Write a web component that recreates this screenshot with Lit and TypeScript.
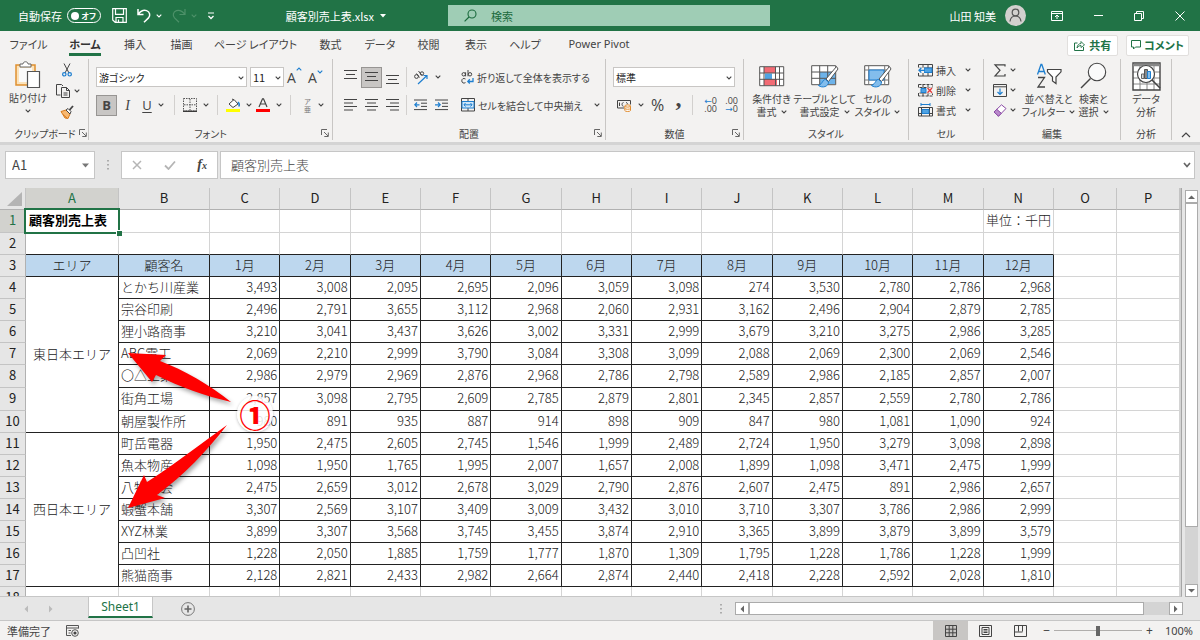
import { LitElement, html, svg, css, nothing, TemplateResult } from "lit";
import { customElement, property } from "lit/decorators.js";
import { classMap } from "lit/directives/class-map.js";

const MONTHS = ["1月", "2月", "3月", "4月", "5月", "6月", "7月", "8月", "9月", "10月", "11月", "12月"];
const LETTERS = "ABCDEFGHIJKLMNOP".split("");

interface Customer { name: string; sales: number[]; }
interface Area { name: string; customers: Customer[]; }

const c = (name: string, ...sales: number[]): Customer => ({ name, sales });

const AREAS: Area[] = [
  {
    name: "東日本エリア",
    customers: [
      c("とかち川産業", 3493, 3008, 2095, 2695, 2096, 3059, 3098, 274, 3530, 2780, 2786, 2968),
      c("宗谷印刷", 2496, 2791, 3655, 3112, 2968, 2060, 2931, 3162, 2496, 2904, 2879, 2785),
      c("狸小路商事", 3210, 3041, 3437, 3626, 3002, 3331, 2999, 3679, 3210, 3275, 2986, 3285),
      c("ABC電工", 2069, 2210, 2999, 3790, 3084, 3308, 3099, 2088, 2069, 2300, 2069, 2546),
      c("〇△工業", 2986, 2979, 2969, 2876, 2968, 2786, 2798, 2589, 2986, 2185, 2857, 2007),
      c("街角工場", 2857, 3098, 2795, 2609, 2785, 2879, 2801, 2345, 2857, 2559, 2780, 2786),
      c("朝屋製作所", 980, 891, 935, 887, 914, 898, 909, 847, 980, 1081, 1090, 924),
    ],
  },
  {
    name: "西日本エリア",
    customers: [
      c("町岳電器", 1950, 2475, 2605, 2745, 1546, 1999, 2489, 2724, 1950, 3279, 3098, 2898),
      c("魚本物産", 1098, 1950, 1765, 1995, 2007, 1657, 2008, 1899, 1098, 3471, 2475, 1999),
      c("八物商会", 2475, 2659, 3012, 2678, 3029, 2790, 2876, 2607, 2475, 891, 2986, 2657),
      c("蝦蟹本舗", 3307, 2569, 3107, 3409, 3009, 3432, 3010, 3710, 3307, 3786, 2986, 2999),
      c("XYZ林業", 3899, 3307, 3568, 3745, 3455, 3874, 2910, 3365, 3899, 3879, 3899, 3579),
      c("凸凹社", 1228, 2050, 1885, 1759, 1777, 1870, 1309, 1795, 1228, 1786, 1228, 1999),
      c("熊猫商事", 2128, 2821, 2433, 2982, 2664, 2874, 2440, 2418, 2228, 2592, 2028, 1810),
    ],
  },
];

/* ---------- icons ---------- */

const G = "#444";
const B = "#1e7fd0";
const LB = "#83bdec";

const icon = (w: number, h: number, body: unknown) => html`<svg
  class="ic" width=${w} height=${h} viewBox="0 0 ${w} ${h}" fill="none" aria-hidden="true">${body}</svg>`;

const caret = () => icon(6, 4, svg`<path d="M.7.7 3 3 5.3.7" stroke="currentColor" stroke-width="1.1"/>`);

/* Three or four text lines; "top" shifts the block for top / middle / bottom alignment. */
const lines = (spans: [number, number][], pitch: number, top: number) =>
  icon(13, 14, svg`${spans.map(([a, b], i) => svg`<path d="M${a} ${top + i * pitch}H${b}" stroke=${G}/>`)}`);

const ICONS: Record<string, TemplateResult> = {
  save: icon(15, 15, svg`<path d="M.7.7h13.6v13.6H3.2L.7 12z M3.5.7v5.6h8V.7 M4 14V9.5h7V14 M6.5 14v-2.5" stroke="#fff" stroke-width="1.2"/>`),
  undo: icon(14, 15, svg`<path d="M1 1v5.5h5.5 M1.3 6.2C4 2.6 7 1.8 9.6 2.6 13 3.8 13.6 7.600 11.500 9.900L7 14.300" stroke="#fff" stroke-width="1.5"/>`),
  redo: icon(14, 15, svg`<path d="M13 1v5.500H7.500 M12.700 6.200C10 2.600 7 1.800 4.400 2.600 1 3.800.4 7.600 2.500 9.900L7 14.300" stroke="#4d9169" stroke-width="1.200"/>`),
  qat: icon(8, 8, svg`<path d="M1 1h6" stroke="#fff"/><path d="M1.500 4 4 6.500 6.500 4" stroke="#fff" stroke-width="1.300"/>`),
  search: icon(13, 13, svg`<circle cx="8" cy="5" r="4" stroke="#1b6a3d" stroke-width="1.100"/><path d="M5 8 .6 12.400" stroke="#1b6a3d" stroke-width="1.200"/>`),
  user: icon(21, 21, svg`<circle cx="10.500" cy="10.500" r="10.500" fill="#d2d0ce"/><circle cx="10.500" cy="7.500" r="3.300" stroke="#555" stroke-width="1.200"/><path d="M5 16.500c.4-3.700 2.500-5.500 5.500-5.500s5.100 1.800 5.500 5.500" stroke="#555" stroke-width="1.200"/>`),
  ribbonOpt: icon(12, 10, svg`<path d="M.5.500h11v9H.5z M.5 2.500h11 M6 8V4 M4 6l2-2 2 2" stroke="#fff"/>`),
  min: icon(9, 9, svg`<path d="M0 4.500h9" stroke="#fff"/>`),
  restore: icon(10, 10, svg`<path d="M.5 2.500h7v7h-7z M2.500 2.500v-2h7v7h-2" stroke="#fff"/>`),
  close: icon(10, 10, svg`<path d="M.5.500l9 9 M9.500.500l-9 9" stroke="#fff"/>`),
  share: icon(11, 11, svg`<path d="M3.500 3H.5v7.500h9V7" stroke="#217346"/><path d="M3 8c.3-3 2-4.500 4-4.500V1.500L10.500 5 7 7.500v-2C5.500 5.500 4 6.500 3 8z" stroke="#217346" stroke-width=".9"/>`),
  comment: icon(10, 10, svg`<path d="M.5.500h9v6.500H4.500L2.500 9V7h-2z" stroke="#217346"/>`),
  paste: icon(26, 28, svg`<path d="M1 4h19v20H1z" fill="#fbe3bb" stroke="#e0902f" stroke-width="1.500"/><path d="M4 7h13v14H4z" fill="#fafafa"/><path d="M5 6V3h3c0-3 5-3 5 0h3v3z" fill="#fff" stroke="#666"/><path d="M12.500 10.500h12v16h-12z" fill="#fff" stroke="#555" stroke-width="1.200"/>`),
  cut: icon(10, 14, svg`<path d="M2 .500 7 10 M8 .500 3 10" stroke=${G}/><circle cx="2.300" cy="11.300" r="1.700" stroke=${B} stroke-width="1.200"/><circle cx="7.700" cy="11.300" r="1.700" stroke=${B} stroke-width="1.200"/>`),
  copy: icon(15, 14, svg`<path d="M4.500 11H.5V.500h5L7 2" stroke=${G}/><path d="M5.500 3.500h5l3 3v7h-8z M10.500 3.500v3h3 M7.500 9h4 M7.500 11h4" stroke=${G}/>`),
  brush: icon(14, 14, svg`<path d="M1 6.500 6 5l4 4-2 4.500L5 13z" fill="#f7b871" stroke="#d77a1d"/><path d="M3 9.500l4 3.500" stroke="#d77a1d"/><path d="M6 5l2-1.500L11 6.500 10 9z" fill="#fff" stroke=${G}/><path d="M9.500 5 13 1" stroke=${G} stroke-width="1.800"/>`),
  borders: icon(14, 14, svg`<path d="M.5.500h13v12.500H.5z M7 1v12 M1 6.800h12" stroke="#555" stroke-dasharray="1.500 1"/><path d="M0 13.300h14" stroke="#333" stroke-width="1.300"/>`),
  fill: icon(14, 14, svg`<path d="M3 6l5-4.500 4 4.500-5 3.500z M6 1l2 1" fill="#fff" stroke=${G}/><path d="M12 4c1.500 1.500 1.500 3 .8 4.500" stroke=${B} stroke-width="1.600"/><path d="M0 11h14v3H0z" fill="#ff0"/>`),
  fontColor: icon(14, 14, svg`<path d="M3 9 6.500.800h1L11 9 M4.200 6h5.600" stroke=${G} stroke-width="1.200"/><path d="M0 11h14v3H0z" fill="#f00"/>`),
  orient: icon(16, 15, svg`<circle cx="3.500" cy="6.500" r="1.900" stroke=${G}/><path d="M3.500 3.500 6.500 7.500 M5.500 1l3.500 4.500" stroke=${G}/><circle cx="9" cy="3.500" r="1.700" stroke=${G}/><path d="M5 14 14 5.500 M10.500 5.500h3.500V9" stroke=${B} stroke-width="1.200"/>`),
  indentOut: icon(14, 12, svg`<path d="M0 1h13 M7 4.200h6 M7 7.400h6 M0 10.600h13" stroke=${G}/><path d="M5.500 5.800H.8 M3 3.500.8 5.800 3 8" stroke=${B} stroke-width="1.200"/>`),
  indentIn: icon(14, 12, svg`<path d="M0 1h13 M7 4.200h6 M7 7.400h6 M0 10.600h13" stroke=${G}/><path d="M0 5.800h5 M3 3.500l2.200 2.300L3 8" stroke=${B} stroke-width="1.200"/>`),
  wrap: icon(13, 14, svg`<circle cx="2.700" cy="4.300" r="1.700" stroke=${G}/><path d="M4.600 2.300v4 M7 0v6.300" stroke=${G}/><circle cx="9" cy="4.300" r="1.700" stroke=${G}/><path d="M4.500 9C2.500 7.800.8 8.800.8 10.800s1.700 3 3.700 1.800" stroke=${G}/><path d="M12 8v3.500H7 M8.800 9.300 6.800 11.500l2 2" stroke=${B} stroke-width="1.300"/>`),
  merge: icon(14, 14, svg`<path d="M.5.500h13v12.500H.5z M7 .500v3 M7 10v3" stroke=${G}/><path d="M1 3.500h12v6.500H1z" fill="#cfe6f8" stroke=${B}/><path d="M3 6.800h8 M4.500 5 3 6.800l1.500 1.700 M9.500 5 11 6.800 9.500 8.500" stroke=${B}/>`),
  currency: icon(15, 13, svg`<path d="M.5 1.500h13v4 M.5 1.500V9H7" stroke=${G}/><path d="M6.500 3.500c-2 .3-2 3.500 0 3.800 M9 3.500c1.500.3 1.500 1 1.300 1.800 M2.500 3.500v3.500" stroke=${G}/><path d="M7.800 7v4.500c0 1.300 5.700 1.300 5.700 0V7" fill="#fff" stroke="#e08a2c"/><ellipse cx="10.700" cy="7" rx="2.900" ry="1.100" fill="#fff" stroke="#e08a2c"/><path d="M7.800 9.300c0 1.300 5.700 1.300 5.700 0" stroke="#e08a2c"/>`),
  condFmt: icon(26, 22, svg`<path d="M.7 1.700h24v19H.7z" fill="#fff"/><path d="M5 2h11v6H5z M5 14h13v6.500H5z" fill="#f26b74"/><path d="M6 8.500h7v5.500H6z" fill="#4fa3e3"/><path d="M.7 1.700h24v19H.7z M.7 8h24 M.7 14.300h24 M5 1.700v19 M16.500 1.700v19 M20.500 1.700v19" stroke="#555"/>`),
  tableFmt: icon(28, 27, svg`<path d="M.7 2.700h24v19H.7z" fill="#fff"/><path d="M9 9h15.500v12H9z" fill="#6db3ea"/><path d="M.7 2.700h24v19H.7z M.7 9h24 M.7 15.300h24 M8.700 2.700v19 M16.700 2.700v19" stroke="#555"/><path d="M25.500 3.500 15 16l2.500 2.500L27 6z" fill="#fff" stroke="#555"/><path d="M14.500 16.500c-3 0-2.500 4-7 6 4 3 10 1 10-3.500z" fill=${LB} stroke=${B}/>`),
  cellStyle: icon(28, 27, svg`<path d="M.7 2.700h24v19H.7z" fill="#fff" stroke="#555"/><path d="M.7 7h24 M.7 17h24 M4.700 2.700v19 M20.700 2.700v19" stroke="#777"/><path d="M5 7h15v10H5z" fill=${LB} stroke=${B}/><path d="M25.500 3.500 15 16l2.500 2.500L27 6z" fill="#fff" stroke="#555"/><path d="M14.500 16.500c-3 0-2.500 4-7 6 4 3 10 1 10-3.500z" fill=${LB} stroke=${B}/>`),
  insert: icon(15, 13, svg`<path d="M.5.500h14v11.500H.5z M.5 4h14 M.5 8.500h14 M5 .500v3.500 M10 .500v11.500 M5 8.500v3.500" stroke=${G}/><path d="M6 4h8v4.500H6z" fill="#4fa3e3" stroke=${B}/><path d="M0 3.500h6v5.500H0z" fill="#f3f2f1"/><path d="M7 6.300H1 M3.300 4 1 6.300l2.300 2.300" stroke=${B} stroke-width="1.300"/>`),
  remove: icon(15, 13, svg`<path d="M.5.500h14v3 M.5.500v3h14 M5 .500v3 M10 .500v3 M.5 12V9h14v3H.5 M5 9v3 M10 9v3" stroke=${G} stroke-dasharray="3 1"/><path d="M3 4.500h5v4H3z" fill="#4fa3e3" stroke=${B}/><path d="M9 3.500h6v6H9z" fill="#f3f2f1"/><path d="M9.500 4 14 8.800 M14 4 9.500 8.800" stroke="#e33b3b" stroke-width="1.300"/>`),
  format: icon(15, 14, svg`<path d="M3 1.500h9 M3 0v3 M12 0v3" stroke=${B}/><path d="M.5 4.500h14V13H.5z M.5 10.500h14 M3.500 4.500V13 M11.500 4.500V13" stroke=${G}/><path d="M4 6.500h7v4H4z" fill="#4fa3e3" stroke=${B}/>`),
  sigma: icon(14, 13, svg`<path d="M12 2.500V.800H2l5 5.500L2 12h10v-2" stroke=${G} stroke-width="1.200"/>`),
  fillDown: icon(14, 13, svg`<path d="M.5.500h13v12H.5z M.5 2.800h13" stroke=${G}/><path d="M7 4.500v6 M4.500 8 7 10.500 9.500 8" stroke=${B} stroke-width="1.200"/>`),
  eraser: icon(14, 13, svg`<path d="M1 8 8.500.800 13 4.500 5.500 12.200z" fill="#fff" stroke="#8a4aa5"/><path d="M1 8l2.800-2.700L8.300 9.300 5.500 12.200z" fill="#b98acb" stroke="#8a4aa5"/>`),
  sortFilter: icon(26, 26, svg`<path d="M1.500 11.500 5 1.500h.8l3.500 10 M2.500 8.500h6" stroke=${B} stroke-width="1.300"/><path d="M2 14.500h6.500L2 24h7" stroke=${G} stroke-width="1.300"/><path d="M11.500 6.500h13.500v2.300L20 14v6.500L16.500 18v-4L11.500 8.800z" fill="#fff" stroke=${G} stroke-width="1.200"/>`),
  find: icon(27, 28, svg`<circle cx="17" cy="10" r="8.700" fill="#fafafa" stroke=${G} stroke-width="1.100"/><path d="M10.500 16.500 1 26" stroke=${G} stroke-width="1.400"/>`),
  analyze: icon(29, 29, svg`<path d="M1 1h27v27H1z" fill="#fff"/><path d="M1 10h27 M1 16h27 M1 22h27 M8 4v24 M15 4v24 M22 4v24" stroke="#888"/><path d="M1 1h27v27H1z" stroke=${G} stroke-width="1.400"/><path d="M1 3h27" stroke="#888" stroke-width="2.500"/><circle cx="14" cy="12" r="8.500" fill="#fff" stroke=${G} stroke-width="1.200"/><path d="M9.500 12h2.500v4.500H9.500z" fill="#ddd" stroke="#666"/><path d="M12.500 7.500h3v9h-3z" fill="#888" stroke="#555"/><path d="M15.500 9.500h3v7h-3z" fill=${LB} stroke=${B}/><path d="M20 18l8 8" stroke=${G} stroke-width="1.600"/>`),
  launcher: icon(8, 8, svg`<path d="M.5 6V.500H6 M3 3l4 4 M7.300 3.500v4h-4" stroke="#666"/>`),
  collapse: icon(10, 6, svg`<path d="M1 5 5 1l4 4" stroke=${G} stroke-width="1.200"/>`),
  tri: icon(8, 5, svg`<path d="M0 .500h7L3.500 4.500z" fill="#777"/>`),
  cancel: icon(10, 10, svg`<path d="M1 1l8 8 M9 1 1 9" stroke="#b5b5b5" stroke-width="1.500"/>`),
  enter: icon(12, 10, svg`<path d="M1 5.500 4.500 9 11 1.500" stroke="#b5b5b5" stroke-width="1.800"/>`),
  expand: icon(8, 6, svg`<path d="M1 1l3 3.500L7 1" stroke="#666" stroke-width="1.700"/>`),
  up: icon(7, 4, svg`<path d="M0 4h7L3.500.500z" fill="#666"/>`),
  down: icon(7, 4, svg`<path d="M0 0h7L3.500 3.500z" fill="#666"/>`),
  left: icon(4, 8, svg`<path d="M4 .500v7L.5 4z" fill="currentColor"/>`),
  right: icon(4, 8, svg`<path d="M0 .500v7L3.500 4z" fill="currentColor"/>`),
  plus: icon(14, 14, svg`<circle cx="7" cy="7" r="6.400" stroke="#777"/><path d="M7 3.500v7 M3.500 7h7" stroke="#666" stroke-width="1.600"/>`),
  dots: icon(2, 10, svg`<path d="M1 0v10" stroke="#999" stroke-width="1.500" stroke-dasharray="1.500 2.500"/>`),
  macro: icon(13, 12, svg`<path d="M5 10.500H.5v-10h12v3 M.5 3h12 M2.500 5.500H5 M2.500 8h2" stroke="#555"/><circle cx="9" cy="8" r="3.300" stroke="#555"/><circle cx="9" cy="8" r="1.600" fill="#444"/>`),
  viewNormal: icon(12, 12, svg`<path d="M.5.500h11v11H.5z M.5 4.200h11 M.5 7.800h11 M4.200.500v11 M7.800.500v11" stroke="#444"/>`),
  viewPage: icon(13, 12, svg`<path d="M.5.500h12v11H.5z M3 2.500h7v7H3z M4.500 4.500h4 M4.500 6h4 M4.500 7.500h4" stroke="#444"/>`),
  viewBreak: icon(13, 12, svg`<path d="M.5.500h12v11H.5z M4.500.500v6 M8.500.500v6 M.5 7h8" stroke="#444"/>`),
  corner: icon(15, 14, svg`<path d="M15 0v14H0z" fill="#b4b4b4"/>`),
};

const base = css`
  * { box-sizing: border-box; }
  .ic { display: block; flex: none; }
  button, input, select { font: inherit; color: inherit; margin: 0; }
  button { background: none; border: 0; padding: 0; white-space: nowrap; }
`;

/* ---------- ribbon ---------- */

@customElement("ribbon-group")
export class RibbonGroup extends LitElement {
  @property() label = "";
  @property({ type: Boolean }) launcher = false;
  static styles = [base, css`
    :host { display: flex; flex-direction: column; border-right: 1px solid #c8c6c4; min-width: 0; }
    .body { flex: 1; display: flex; min-height: 0; }
    .foot { display: grid; grid-template-columns: 14px 1fr 14px; align-items: center; height: 14px; text-align: center; white-space: nowrap; }
    .name { grid-column: 2; justify-self: center; }
    .foot button { grid-column: 3; justify-self: center; }
  `];
  render() {
    return html`<div class="body"><slot></slot></div>
      <div class="foot"><span class="name">${this.label}</span>
        ${this.launcher ? html`<button aria-label="${this.label}の設定">${ICONS.launcher}</button>` : nothing}</div>`;
  }
}

@customElement("excel-ribbon")
export class ExcelRibbon extends LitElement {
  static styles = [base, css`
    :host { display: block; background: #f3f2f1; border-bottom: 3px solid #d4d4d4; color: #444; font-size: 10px; line-height: 13px; }
    .tabs { display: flex; align-items: center; height: 28px; font-size: 11px; line-height: 16px; }
    .tablist { display: grid; grid-template-columns: 57px 56px 44px 49px 99px 51px 48px 49px 46px 52px 96px; justify-items: center; }
    .tab { padding: 2px 0 1px; border-bottom: 3px solid transparent; }
    .tab.on { color: #333; font-weight: 700; border-color: #217346; }
    .tab.latin { font-family: "Noto Sans", sans-serif; }
    .acts { margin-left: auto; display: flex; gap: 8px; padding-right: 11px; color: #217346; font-weight: 700; }
    .act { display: flex; align-items: center; justify-content: center; gap: 4px; height: 21px; padding: 0 6px; background: #fff; border: 1px solid #e1dfdd; border-radius: 2px; }
    .act.tight { padding: 0 4px; gap: 3px; }
    .groups { display: flex; height: 83px; padding-bottom: 2px; }
    .clip { width: 89px; } .font { width: 244px; } .align { width: 273px; } .num { width: 138px; }
    .style { width: 165px; } .cells { width: 75px; } .edit { width: 137px; } .data { width: 51px; }
    .col { display: flex; flex-direction: column; }
    .paste { width: 56px; }
    .row { display: flex; align-items: center; height: 28px; }
    .rows { display: flex; flex-direction: column; padding: 4px 7px 0; flex: 1; }
    .rows.fixed { flex: none; width: 121px; padding-right: 0; }
    .b { display: flex; align-items: center; justify-content: center; width: 21px; height: 21px; flex: none; }
    .b.c { width: 34px; gap: 6px; }
    .font .b.c { width: 30px; }
    .b.on { background: #c8c6c4; border: 1px solid #979593; }
    .b.t { width: auto; gap: 3px; }
    .more { margin-left: 8px; }
    .sep { width: 1px; height: 20px; background: #d2d0ce; margin: 0 3px; flex: none; }
    .font .sep { margin: 0 6px; }
    .vsep { width: 1px; height: 52px; margin: 5px 0 0; background: #d2d0ce; }
    .bigs { display: grid; flex: 1; align-content: start; justify-items: center; padding-top: 1px; }
    .three { grid-template-columns: 55px 51px 55px; }
    .two { grid-template-columns: 47px 43px; }
    .big { display: flex; flex-direction: column; align-items: center; text-align: center; }
    .pic { display: flex; align-items: center; justify-content: center; height: 32px; }
    .big .ln { display: flex; align-items: center; justify-content: center; gap: 4px; height: 13px; }
    .combo { position: relative; display: block; height: 20px; }
    .combo select { appearance: none; display: block; width: 100%; height: 20px; border: 1px solid #c8c6c4; border-radius: 0; background: #fff; padding: 0 2px; color: #222; }
    .combo .ic { position: absolute; right: 3px; top: 9px; pointer-events: none; }
    .fname { width: 151px; margin-right: 3px; } .fsize { width: 34px; font-size: 11px; } .fmt { width: 122px; }
    .letter { font-family: "Open Sans", sans-serif; font-size: 13px; }
    .bold { font-weight: 700; } .ital { font-family: "Liberation Serif", serif; font-style: italic; font-size: 14px; } .und { text-decoration: underline; text-underline-offset: 2px; }
    .grow { font-family: "Open Sans", sans-serif; font-size: 14px; gap: 0; }
    .grow .ic { color: #1e7fd0; align-self: flex-start; margin-top: 3px; }
    .flip { display: flex; transform: rotate(180deg); align-self: flex-start; }
    .ruby { flex-direction: column; font-size: 7px; line-height: 8px; color: #777; }
    .pct { font-family: "Open Sans", sans-serif; font-size: 16px; }
    .comma { font-family: "Liberation Serif", serif; font-size: 24px; font-weight: 700; line-height: 10px; padding-bottom: 14px; }
    .dec { flex-direction: column; align-items: stretch; font-family: "Open Sans", sans-serif; font-size: 9px; line-height: 8px; text-align: right; }
    .arr { color: #1e7fd0; font-family: "DejaVu Sans", sans-serif; }
    .end { flex: 1; display: flex; align-items: flex-end; justify-content: center; padding-bottom: 2px; }
    .small { padding: 1px 9px 0; }
    .small .row { height: 20px; gap: 3px; }
    .small .row .more { margin-left: 6px; }
  `];

  big(pic: string, l1: string, l2: string) {
    return html`<button class="big"><span class="pic">${ICONS[pic]}</span>
      <span class="ln">${l1}</span><span class="ln">${l2}${pic === "analyze" ? nothing : caret()}</span></button>`;
  }
  ib(name: string, label: string) {
    return html`<button class="b" aria-label=${label}>${ICONS[name]}</button>`;
  }
  drop(name: string, label: string) {
    return html`<button class="b c" aria-label=${label}>${ICONS[name]}${caret()}</button>`;
  }
  bars(spans: [number, number][], label: string, top = 1.5, on = false) {
    return html`<button class=${classMap({ b: true, on })} aria-label=${label}>${lines(spans, spans.length > 3 ? 3.5 : 4, top)}</button>`;
  }

  render() {
    const tabs = ["ファイル", "ホーム", "挿入", "描画", "ページ レイアウト", "数式", "データ", "校閲", "表示", "ヘルプ", "Power Pivot"];
    const centered: [number, number][] = [[0, 13], [2, 11], [0, 13]];
    return html`
      <div class="tabs">
        <div class="tablist" role="tablist">
          ${tabs.map((t) => html`<button role="tab" class=${classMap({ tab: true, on: t === "ホーム", latin: t === "Power Pivot" })}>${t}</button>`)}
        </div>
        <div class="acts">
          <button class="act">${ICONS.share}共有</button>
          <button class="act tight">${ICONS.comment}コメント</button>
        </div>
      </div>
      <div class="groups">
        <ribbon-group class="clip" label="クリップボード" launcher>
          <button class="big paste"><span class="pic">${ICONS.paste}</span><span class="ln">貼り付け</span><span class="ln">${caret()}</span></button>
          <div class="col">
            <button class="b" aria-label="切り取り">${ICONS.cut}</button>
            <button class="b t" aria-label="コピー">${ICONS.copy}${caret()}</button>
            <button class="b" aria-label="書式のコピー">${ICONS.brush}</button>
          </div>
        </ribbon-group>

        <ribbon-group class="font" label="フォント" launcher>
          <div class="rows">
            <div class="row">
              <label class="combo fname"><select aria-label="フォント"><option>游ゴシック</option></select>${caret()}</label>
              <label class="combo fsize"><select aria-label="フォント サイズ"><option>11</option></select>${caret()}</label>
              <button class="b grow" aria-label="フォント サイズの拡大">A<span class="flip">${caret()}</span></button>
              <button class="b grow" aria-label="フォント サイズの縮小">A${caret()}</button>
            </div>
            <div class="row">
              <button class="b on letter bold">B</button>
              <button class="b letter ital">I</button>
              <button class="b c letter"><span class="und">U</span>${caret()}</button>
              <span class="sep"></span>${this.drop("borders", "罫線")}
              <span class="sep"></span>${this.drop("fill", "塗りつぶしの色")}${this.drop("fontColor", "フォントの色")}
              <span class="sep"></span>
              <button class="b ruby" aria-label="ふりがな"><span>ア</span><span>亜</span></button>${caret()}
            </div>
          </div>
        </ribbon-group>

        <ribbon-group class="align" label="配置" launcher>
          <div class="rows fixed">
            <div class="row">
              ${this.bars(centered, "上揃え", 0.5)}${this.bars(centered, "上下中央揃え", 2.5, true)}${this.bars(centered, "下揃え", 5.5)}
              <span class="sep"></span>${this.drop("orient", "方向")}
            </div>
            <div class="row">
              ${this.bars([[0, 13], [0, 9], [0, 13], [0, 9]], "左揃え")}${this.bars([[0, 13], [2, 11], [0, 13], [2, 11]], "中央揃え")}${this.bars([[0, 13], [4, 13], [0, 13], [4, 13]], "右揃え")}
              <span class="sep"></span>${this.ib("indentOut", "インデントを減らす")}${this.ib("indentIn", "インデントを増やす")}
            </div>
          </div>
          <div class="vsep"></div>
          <div class="rows">
            <div class="row"><button class="b t">${ICONS.wrap}折り返して全体を表示する</button></div>
            <div class="row"><button class="b t">${ICONS.merge}セルを結合して中央揃え<span class="more">${caret()}</span></button></div>
          </div>
        </ribbon-group>

        <ribbon-group class="num" label="数値" launcher>
          <div class="rows">
            <div class="row"><label class="combo fmt"><select aria-label="表示形式"><option>標準</option></select>${caret()}</label></div>
            <div class="row">
              ${this.drop("currency", "通貨表示形式")}
              <button class="b pct">%</button><button class="b comma">,</button>
              <span class="sep"></span>
              <button class="b dec" aria-label="小数点以下の表示桁数を増やす"><span><span class="arr">←</span>0</span><span>.00</span></button>
              <button class="b dec" aria-label="小数点以下の表示桁数を減らす"><span>.00</span><span><span class="arr">→</span>0</span></button>
            </div>
          </div>
        </ribbon-group>

        <ribbon-group class="style" label="スタイル">
          <div class="bigs three">
            ${this.big("condFmt", "条件付き", "書式")}${this.big("tableFmt", "テーブルとして", "書式設定")}${this.big("cellStyle", "セルの", "スタイル")}
          </div>
        </ribbon-group>

        <ribbon-group class="cells" label="セル">
          <div class="col small">
            ${[["insert", "挿入"], ["remove", "削除"], ["format", "書式"]].map(([i, t]) => html`
              <button class="row">${ICONS[i]}${t}<span class="more">${caret()}</span></button>`)}
          </div>
        </ribbon-group>

        <ribbon-group class="edit" label="編集">
          <div class="col small">
            ${[["sigma", "合計"], ["fillDown", "フィル"], ["eraser", "クリア"]].map(([i, t]) => html`
              <button class="row" aria-label=${t}>${ICONS[i]}${caret()}</button>`)}
          </div>
          <div class="bigs two">${this.big("sortFilter", "並べ替えと", "フィルター")}${this.big("find", "検索と", "選択")}</div>
        </ribbon-group>

        <ribbon-group class="data" label="分析">
          <div class="bigs">${this.big("analyze", "データ", "分析")}</div>
        </ribbon-group>
        <div class="end"><button aria-label="リボンを折りたたむ">${ICONS.collapse}</button></div>
      </div>`;
  }
}

/* ---------- worksheet ---------- */

@customElement("work-sheet")
export class WorkSheet extends LitElement {
  static styles = [base, css`
    :host { display: flex; flex: 1; min-height: 0; background: #e6e6e6; font-feature-settings: normal; }
    .pane { position: relative; flex: 1; min-width: 0; overflow: hidden; border-right: 1px solid #a6a6a6; border-bottom: 1px solid #c6c6c6; background: #fff; }
    table { width: 100%; table-layout: fixed; border-collapse: separate; border-spacing: 0; font-size: 13px; line-height: 18px; color: #222; }
    .w-no { width: 26px; } .w-a { width: 93px; } .w-b { width: 91px; } .w-o { width: 63px; } .w-q { width: 1px; }
    th, td { padding: 0 0 2px; font-weight: 300; white-space: nowrap; border-right: 1px solid #d4d4d4; border-bottom: 1px solid #d4d4d4; height: 22px; }
    .tall > * { height: 23px; }
    thead th { background: #e6e6e6; font-weight: 400; border-color: #b1b1b1; border-right-color: #c4c4c4; }
    tbody th { background: #e6e6e6; font-weight: 400; border-color: #c4c4c4; border-right-color: #b1b1b1; text-align: center; }
    thead .sel, tbody .sel { background: #d2d2ce; color: #217346; }
    thead .corner { padding: 0 3px 0 7px; }
    .base { border-bottom-color: #222; }
    .head { background: #bdd7ee; text-align: center; border-color: #222; }
    .area { text-align: center; border-color: #222; }
    .name { padding-left: 2px; border-color: #222; }
    .num { text-align: right; padding-right: 2px; border-color: #222; }
    .unit { text-align: right; padding-right: 2px; }
    .title { position: relative; font-weight: 700; padding-left: 3px; color: #000; }
    .cursor { position: absolute; inset: -2px; border: 2px solid #217346; }
    .grip { position: absolute; right: -4px; bottom: -4px; width: 6px; height: 6px; background: #217346; border: 1px solid #fff; border-width: 1px 0 0 1px; }
    .arrows { position: absolute; left: 118px; top: 152px; filter: drop-shadow(2px 3px 2px rgba(0, 0, 0, .35)); }
    .badge { position: absolute; left: 237px; top: 208px; width: 36px; height: 36px; border-radius: 50%; background: rgba(255, 255, 255, .85); box-shadow: 0 1px 3px rgba(0, 0, 0, .25); color: #f00; font-size: 31px; font-weight: 900; line-height: 35px; text-align: center; }
    .vbar { width: 18px; display: flex; flex-direction: column; align-items: center; padding: 2px 0 0; }
    .vbar button { display: flex; align-items: center; justify-content: center; width: 13px; height: 13px; background: #fff; border: 1px solid #ababab; }
    .track { flex: 1; width: 13px; background: #d4d4d4; }
    .thumb { height: 85%; background: #fff; border: 1px solid #ababab; }
  `];

  blanks(n: number, cls = "") {
    return Array.from({ length: n }, () => html`<td class=${cls}></td>`);
  }

  render() {
    let rowNo = 3;
    return html`
      <div class="pane">
        <table>
          <colgroup>
            <col class="w-no"><col class="w-a"><col class="w-b">${MONTHS.map(() => html`<col>`)}<col class="w-o"><col class="w-o"><col class="w-q">
          </colgroup>
          <thead><tr><th class="corner">${ICONS.corner}</th>
            ${LETTERS.map((l) => html`<th class=${classMap({ sel: l === "A" })}>${l}</th>`)}<th></th></tr></thead>
          <tbody>
            <tr class="tall"><th class="sel">1</th>
              <td class="title">顧客別売上表<span class="cursor"><span class="grip"></span></span></td>
              ${this.blanks(12)}<td class="unit">単位：千円</td>${this.blanks(3)}</tr>
            <tr><th>2</th>${this.blanks(14, "base")}${this.blanks(3)}</tr>
            <tr><th>3</th>${["エリア", "顧客名", ...MONTHS].map((h) => html`<td class="head">${h}</td>`)}${this.blanks(3)}</tr>
            ${AREAS.map((a) => a.customers.map((cu, i) => {
              rowNo++;
              return html`<tr class=${classMap({ tall: rowNo === 8 || rowNo === 9 })}><th>${rowNo}</th>
                ${i === 0 ? html`<td class="area" rowspan=${a.customers.length}>${a.name}</td>` : nothing}
                <td class="name">${cu.name}</td>
                ${cu.sales.map((v) => html`<td class="num">${v.toLocaleString("en-US")}</td>`)}${this.blanks(3)}</tr>`;
            }))}
            <tr><th>18</th>${this.blanks(17)}</tr>
          </tbody>
        </table>
        <svg class="arrows" width="120" height="180" viewBox="118 340 120 180" aria-hidden="true">
          <path d="M128 353 166 355 160 361C184 370 210 385 231 402 205 396 180 387 156 375L152 382z" fill="#f00"/>
          <path d="M128 508 144 475 147 482C172 466 202 443 227 425 206 452 184 475 157 495L165 498z" fill="#f00"/>
        </svg>
        <div class="badge">①</div>
      </div>
      <div class="vbar"><button aria-label="上へ">${ICONS.up}</button><div class="track"><div class="thumb"></div></div><button aria-label="下へ">${ICONS.down}</button></div>`;
  }
}

/* ---------- window ---------- */

@customElement("app-root")
export class AppRoot extends LitElement {
  static styles = [base, css`
    :host { display: flex; flex-direction: column; height: 100vh; overflow: hidden; background: #e6e6e6; color: #444; font-family: "Noto Sans CJK JP", "Noto Sans", sans-serif; font-size: 11px; line-height: 16px; font-feature-settings: "palt"; }
    .titlebar { display: grid; grid-template-columns: 448fr 322fr 430fr; align-items: center; height: 31px; background: #217346; color: #fff; }
    .left { display: flex; align-items: center; padding: 0 62px 0 18px; }
    .auto { display: flex; align-items: center; gap: 5px; white-space: nowrap; }
    .auto input { position: absolute; opacity: 0; width: 34px; height: 16px; }
    .switch { display: flex; align-items: center; justify-content: space-between; width: 34px; height: 15px; border: 1px solid #fff; border-radius: 8px; padding: 0 4px 0 3px; font-size: 8px; font-weight: 700; }
    .knob { width: 8px; height: 8px; border-radius: 50%; background: #fff; flex: none; }
    .qat { display: flex; align-items: center; gap: 10px; padding-left: 11px; }
    .qat button { display: flex; align-items: center; gap: 5px; }
    .qat .off { color: #4d9169; }
    .file { margin-left: auto; display: flex; align-items: center; gap: 6px; }
    .search { display: flex; align-items: center; gap: 14px; height: 21px; padding: 0 16px; background: #9fcdb5; }
    .search input { flex: 1; min-width: 0; border: 0; padding: 0; background: none; outline: 0; }
    .search input::placeholder { color: #1b6a3d; opacity: 1; }
    .right { display: flex; align-items: center; justify-content: flex-end; gap: 25px; padding-right: 15px; }
    .win { display: flex; align-items: center; gap: 31px; }
    .me { display: flex; align-items: center; gap: 9px; }
    .fbar { display: flex; align-items: flex-start; padding: 6px 5px 0 5px; height: 43px; }
    .box { display: flex; align-items: center; height: 28px; background: #fff; border: 1px solid #c6c6c6; }
    .box input { flex: 1; min-width: 0; width: 100%; border: 0; padding: 0; background: none; outline: 0; }
    .namebox { width: 90px; padding: 0 4px 0 6px; font-size: 13px; }
    .fdots { width: 26px; display: flex; justify-content: center; align-self: flex-start; padding-top: 9px; }
    .fbtns { width: 97px; justify-content: space-between; padding: 0 10px; margin-right: 2px; }
    .fx { font-family: "Liberation Serif", serif; font-style: italic; font-weight: 700; font-size: 14px; }
    .fx small { font-size: 10px; }
    .formula { flex: 1; padding: 0 3px 0 10px; font-size: 13px; font-feature-settings: normal; font-weight: 300; }
    .sheets { display: flex; align-items: center; height: 24px; border-bottom: 1px solid #c6c6c6; padding-right: 17px; }
    .nav { display: flex; gap: 21px; width: 88px; padding-left: 24px; color: #bbb; }
    .sheet { align-self: flex-start; width: 65px; height: 21px; background: #fff; color: #217346; border: 1px solid #c6c6c6; border-width: 0 1px 2px; border-bottom-color: #217346; font-family: "Noto Sans", sans-serif; font-size: 12px; }
    .add { margin-left: 28px; }
    .hsplit { margin-left: auto; padding-right: 13px; }
    .hbar { display: flex; width: 448px; height: 13px; color: #666; }
    .hbar button { display: flex; align-items: center; justify-content: center; width: 14px; background: #fff; border: 1px solid #ababab; }
    .htrack { flex: 1; background: #d4d4d4; }
    .hthumb { width: 94%; height: 100%; background: #fff; border: 1px solid #ababab; }
    .status { display: flex; align-items: center; height: 19px; background: #f3f2f1; padding: 0 7px; }
    .status > .macro { margin-left: 15px; }
    .views { margin-left: auto; display: flex; align-self: stretch; }
    .views button { display: flex; align-items: center; justify-content: center; width: 35px; }
    .views .on { background: #c8c6c4; }
    .zoom { display: flex; align-items: center; gap: 4px; font-family: "Noto Sans", sans-serif; font-size: 12px; padding-left: 5px; }
    .zoom input { appearance: none; width: 88px; height: 12px; background: linear-gradient(#b0aeac, #b0aeac) center / 100% 1px no-repeat; }
    .zoom input::-webkit-slider-thumb { appearance: none; width: 4px; height: 10px; background: #666; }
    .pctv { font-size: 11px; padding-left: 8px; }
  `];

  render() {
    return html`
      <header class="titlebar">
        <div class="left">
          <label class="auto">自動保存<input type="checkbox"><span class="switch"><span class="knob"></span>オフ</span></label>
          <div class="qat">
            <button aria-label="上書き保存">${ICONS.save}</button>
            <button aria-label="元に戻す">${ICONS.undo}${caret()}</button>
            <button class="off" aria-label="やり直し">${ICONS.redo}${caret()}</button>
            <button aria-label="クイック アクセス ツール バーのカスタマイズ">${ICONS.qat}</button>
          </div>
          <button class="file">顧客別売上表.xlsx ${icon(6, 4, svg`<path d="M0 0h6L3 3.500z" fill="#fff"/>`)}</button>
        </div>
        <label class="search">${ICONS.search}<input type="search" placeholder="検索" aria-label="検索"></label>
        <div class="right">
          <button class="me">山田 知美 ${ICONS.user}</button>
          <div class="win">
            <button aria-label="リボンの表示オプション">${ICONS.ribbonOpt}</button>
            <button aria-label="最小化">${ICONS.min}</button>
            <button aria-label="元に戻す (縮小)">${ICONS.restore}</button>
            <button aria-label="閉じる">${ICONS.close}</button>
          </div>
        </div>
      </header>
      <excel-ribbon></excel-ribbon>
      <div class="fbar">
        <label class="box namebox"><input value="A1" aria-label="名前ボックス">${ICONS.tri}</label>
        <span class="fdots">${ICONS.dots}</span>
        <div class="box fbtns">
          <button aria-label="キャンセル">${ICONS.cancel}</button><button aria-label="入力">${ICONS.enter}</button>
          <button class="fx">f<small>x</small></button>
        </div>
        <label class="box formula"><input value="顧客別売上表" aria-label="数式バー">${ICONS.expand}</label>
      </div>
      <work-sheet></work-sheet>
      <div class="sheets">
        <div class="nav">${ICONS.left}${ICONS.right}</div>
        <button class="sheet">Sheet1</button>
        <button class="add" aria-label="新しいシート">${ICONS.plus}</button>
        <span class="hsplit">${ICONS.dots}</span>
        <div class="hbar"><button aria-label="左へ">${ICONS.left}</button><div class="htrack"><div class="hthumb"></div></div><button aria-label="右へ">${ICONS.right}</button></div>
      </div>
      <footer class="status">
        <span>準備完了</span><span class="macro">${ICONS.macro}</span>
        <div class="views">
          <button class="on" aria-label="標準">${ICONS.viewNormal}</button><button aria-label="ページ レイアウト">${ICONS.viewPage}</button><button aria-label="改ページ プレビュー">${ICONS.viewBreak}</button>
        </div>
        <div class="zoom"><button aria-label="縮小">−</button><input type="range" min="0" max="100" value="50" aria-label="ズーム"><button aria-label="拡大">+</button><span class="pctv">100%</span></div>
      </footer>`;
  }
}
